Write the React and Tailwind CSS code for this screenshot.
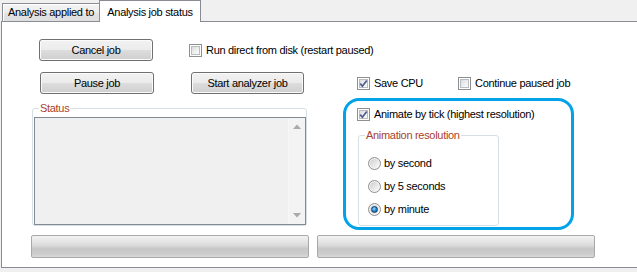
import React from "react";

const Btn = ({ className, children }) => (
  <div
    className={`flex shrink-0 items-center justify-center rounded-[3px] border border-[#707070] bg-[linear-gradient(to_bottom,#f2f2f2_0%,#ebebeb_50%,#dddddd_50%,#cfcfcf_100%)] shadow-[inset_0_0_0_1px_#fbfbfb] ${className}`}
  >
    {children}
  </div>
);

const Check = ({ checked }) => (
  <div className="relative h-[13px] w-[13px] shrink-0 border border-[#8e8f8f] bg-white p-[1px]">
    <div className="h-full w-full border border-[#b9bcc0] bg-[linear-gradient(135deg,#dcdcdc_0%,#f0f0f0_60%,#fbfbfb_100%)]" />
    {checked && (
      <svg className="absolute left-0 top-0" width="11" height="11" viewBox="0 0 11 11">
        <path d="M2.2 5.6 L4.4 8.2 L8.8 2.4" fill="none" stroke="#4b5d8e" strokeWidth="1.7" />
      </svg>
    )}
  </div>
);

const CheckLabel = ({ checked, children, className = "" }) => (
  <div className={`flex shrink-0 items-center gap-[4px] ${className}`}>
    <Check checked={checked} />
    <span className="whitespace-nowrap">{children}</span>
  </div>
);

const Radio = ({ checked, children }) => (
  <div className="flex h-[13px] items-center gap-[3px]">
    <div className="flex h-[13px] w-[13px] shrink-0 items-center justify-center rounded-full border border-[#8f8f8f] bg-[linear-gradient(135deg,#c9c9c9_0%,#e2e2e2_45%,#ffffff_100%)] shadow-[inset_0_0_0_1px_#f4f4f4]">
      {checked && (
        <div className="h-[7px] w-[7px] rounded-full border border-[#123f6b] bg-[radial-gradient(circle_at_40%_35%,#9fdcff_0%,#2c8fd6_45%,#0e4c86_100%)]" />
      )}
    </div>
    <span className="whitespace-nowrap">{children}</span>
  </div>
);

const Bar = ({ className }) => (
  <div
    className={`shrink-0 rounded-[2px] border border-[#a9a9a9] bg-[linear-gradient(to_bottom,#f2f2f2_0%,#e6e6e6_25%,#dadada_45%,#c7c7c7_60%,#cccccc_85%,#dadada_100%)] ${className}`}
  />
);

export default function App() {
  return (
    <div className="h-[272px] w-[637px] overflow-hidden bg-[#f0f0f0] font-['Liberation_Sans',Arial,sans-serif] text-[11px] leading-[13px] tracking-[-0.3px] text-black">
      {/* tab strip */}
      <div className="flex h-[21px] items-end pl-[2px]">
        <div className="flex h-[18px] w-[98px] items-center justify-center border border-b-0 border-[#898c95] bg-[linear-gradient(to_bottom,#f4f4f4_0%,#ececec_50%,#e3e3e3_51%,#dedede_100%)] shadow-[inset_1px_1px_0_#ffffff]">
          Analysis applied to
        </div>
        <div className="relative z-10 -mb-px -ml-px flex h-[22px] w-[102px] items-center justify-center border border-b-0 border-[#898c95] bg-white pt-[1px]">
          Analysis job status
        </div>
      </div>

      {/* panel */}
      <div className="ml-[1px] h-[247px] w-[640px] border border-[#898c95] bg-white">
        <div className="flex flex-col">
          {/* row 1 */}
          <div className="mt-[17px] flex items-start">
            <Btn className="ml-[37px] h-[22px] w-[114px]">Cancel job</Btn>
            <CheckLabel className="ml-[36px] mt-[5px]">Run direct from disk (restart paused)</CheckLabel>
          </div>

          {/* row 2 */}
          <div className="mt-[11px] flex items-start">
            <Btn className="ml-[38px] h-[22px] w-[114px]">Pause job</Btn>
            <Btn className="ml-[37px] h-[22px] w-[113px]">Start analyzer job</Btn>
            <CheckLabel checked className="ml-[53px] mt-[5px] w-[101px]">Save CPU</CheckLabel>
            <CheckLabel className="mt-[5px]">Continue paused job</CheckLabel>
          </div>

          {/* row 3 */}
          <div className="mt-[4px] flex items-start">
            {/* Status group */}
            <div className="relative ml-[30px] mt-[10px] h-[118px] w-[275px] shrink-0 rounded-[3px] border border-[#d5dfe5]">
              <span className="absolute left-[6px] top-[-7px] bg-white px-[1px] text-[#a8432c]">Status</span>
              <div className="ml-[1px] mt-[8px] flex h-[108px] w-[272px] border border-[#848a93] bg-[#f0f0f0]">
                <div className="flex-1" />
                <div className="flex w-[17px] flex-col items-center justify-between border-l border-[#f7f7f7] bg-[#f3f3f3] py-[6px]">
                  <svg width="8" height="5" viewBox="0 0 8 5">
                    <path d="M0 5 L4 0.5 L8 5 Z" fill="#a9a9a9" />
                  </svg>
                  <svg width="8" height="5" viewBox="0 0 8 5">
                    <path d="M0 0 L8 0 L4 4.5 Z" fill="#a9a9a9" />
                  </svg>
                </div>
              </div>
            </div>

            {/* highlighted area */}
            <div className="ml-[36px] h-[132px] w-[231px] shrink-0 rounded-[16px] border-[3px] border-[#00a2e8]">
              <CheckLabel checked className="ml-[11px] mt-[7px]">Animate by tick (highest resolution)</CheckLabel>
              <div className="relative ml-[12px] mt-[14px] h-[91px] w-[141px] rounded-[3px] border border-[#d5dfe5] pl-[9px] pt-[21px]">
                <span className="absolute left-[6px] top-[-7px] bg-white px-[1px] text-[#a8432c]">Animation resolution</span>
                <div className="flex flex-col gap-[10px]">
                  <Radio>by second</Radio>
                  <Radio>by 5 seconds</Radio>
                  <Radio checked>by minute</Radio>
                </div>
              </div>
            </div>
          </div>

          {/* row 4 */}
          <div className="mt-[5px] flex">
            <Bar className="ml-[29px] h-[23px] w-[278px]" />
            <Bar className="ml-[8px] h-[23px] w-[278px]" />
          </div>
        </div>
      </div>
    </div>
  );
}
